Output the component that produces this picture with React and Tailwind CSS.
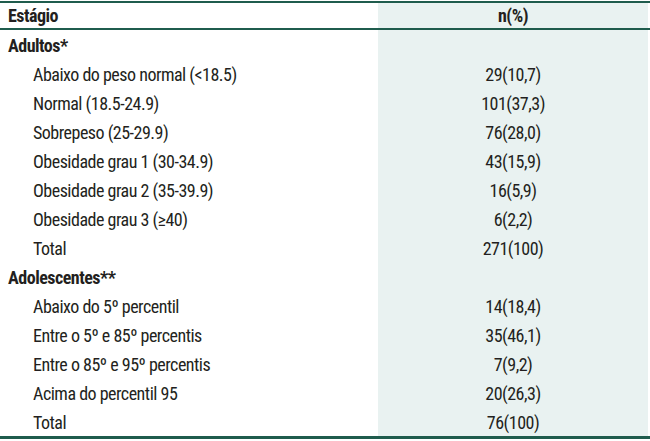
import React from 'react';

const adultos = [
  ['Abaixo do peso normal (<18.5)', '29(10,7)'],
  ['Normal (18.5-24.9)', '101(37,3)'],
  ['Sobrepeso (25-29.9)', '76(28,0)'],
  ['Obesidade grau 1 (30-34.9)', '43(15,9)'],
  ['Obesidade grau 2 (35-39.9)', '16(5,9)'],
  ['Obesidade grau 3 (≥40)', '6(2,2)'],
  ['Total', '271(100)'],
];

const adolescentes = [
  ['Abaixo do 5º percentil', '14(18,4)'],
  ['Entre o 5º e 85º percentis', '35(46,1)'],
  ['Entre o 85º e 95º percentis', '7(9,2)'],
  ['Acima do percentil 95', '20(26,3)'],
  ['Total', '76(100)'],
];

function Row({ label, value, bold, indent }) {
  return (
    <div className="flex h-[29px] items-stretch">
      <div className={`flex w-[378px] items-center pt-[2px] ${indent ? 'pl-[33px]' : 'pl-[8px]'} ${bold ? 'font-bold' : ''}`}>
        {label}
      </div>
      <div className="flex w-[270px] items-center justify-center bg-[#e9f2f1] pt-[2px]">{value}</div>
    </div>
  );
}

function Group({ title, rows }) {
  return (
    <>
      <Row label={title} value="" bold />
      {rows.map(([l, v], i) => (
        <Row key={i} label={l} value={v} indent />
      ))}
    </>
  );
}

export default function App() {
  return (
    <div className="h-[441px] w-[650px] bg-white font-['Roboto_Condensed',sans-serif] text-[18px] leading-none tracking-[-0.5px] text-[#231f20]">
      <div className="mt-[1px] border-t-2 border-[#1f5c4d]">
        <div className="flex h-[27px] items-stretch border-b-2 border-[#1f5c4d]">
          <div className="flex w-[378px] items-center pl-[8px] pt-[1px] font-bold">Estágio</div>
          <div className="flex w-[270px] items-center justify-center bg-[#e9f2f1] pt-[1px] font-bold">n(%)</div>
        </div>
        <Group title="Adultos*" rows={adultos} />
        <Group title="Adolescentes**" rows={adolescentes} />
        <div className="border-t-[3px] border-[#1f5c4d]" />
      </div>
    </div>
  );
}
